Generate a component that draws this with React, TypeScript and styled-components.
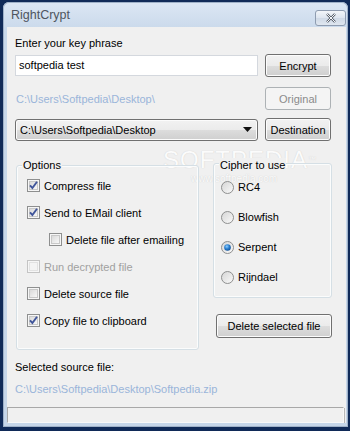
import React from 'react';
import styled, { createGlobalStyle } from 'styled-components';

const GlobalStyle = createGlobalStyle`
	html, body {
		margin: 0;
		padding: 0;
		background: #102a58;
	}
	body {
		width: 350px;
		height: 431px;
		overflow: hidden;
		font-family: 'Liberation Sans', Arial, sans-serif;
		font-size: 11px;
		color: #000;
	}
`;

type CheckProps = { checked?: boolean; disabled?: boolean };

const CheckBox = ({ checked, disabled }: CheckProps) => (
	<svg width="13" height="13" viewBox="0 0 13 13">
		<defs>
			<linearGradient id="cbfill" x1="0" y1="0" x2="1" y2="1">
				<stop offset="0" stopColor="#d8d8d8" />
				<stop offset="1" stopColor="#fafafa" />
			</linearGradient>
		</defs>
		<rect x="0.5" y="0.5" width="12" height="12" fill="#f6f6f6" stroke={disabled ? '#c4c4c4' : '#8e8f8f'} />
		<rect x="2.5" y="2.5" width="8" height="8" fill={disabled ? '#f4f4f4' : 'url(#cbfill)'} stroke={disabled ? '#e2e2e2' : '#c8c8c8'} />
		{checked && (
			<path d="M3 6.4 L5.4 9 L10 2.8" fill="none" stroke="#40559a" strokeWidth="1.9" />
		)}
	</svg>
);

const Radio = ({ checked }: { checked?: boolean }) => (
	<svg width="13" height="13" viewBox="0 0 13 13">
		<defs>
			<linearGradient id="rfill" x1="0" y1="0" x2="1" y2="1">
				<stop offset="0" stopColor="#d4d4d4" />
				<stop offset="1" stopColor="#fbfbfb" />
			</linearGradient>
			<radialGradient id="rdot" cx="0.4" cy="0.35" r="0.7">
				<stop offset="0" stopColor="#8fd0ff" />
				<stop offset="0.5" stopColor="#2b7fd0" />
				<stop offset="1" stopColor="#0e4e94" />
			</radialGradient>
		</defs>
		<circle cx="6.5" cy="6.5" r="6" fill="url(#rfill)" stroke="#8e8f8f" />
		{checked && <circle cx="6.5" cy="6.5" r="3.3" fill="url(#rdot)" />}
	</svg>
);

const App = () => (
	<>
		<GlobalStyle />
		<Window>
			<TitleBar>
				<Title>RightCrypt</Title>
				<CloseButton>
					<svg width="12" height="10" viewBox="0 0 12 10">
						<path d="M2 1 L10 9 M10 1 L2 9" stroke="#555d68" strokeWidth="2.4" fill="none" />
						<path d="M2 1 L10 9 M10 1 L2 9" stroke="#f4f6f9" strokeWidth="1" fill="none" />
					</svg>
				</CloseButton>
			</TitleBar>
			<Client>
				<Watermark>
					SOFTPEDIA<sup>™</sup>
					<small>www.softpedia.com</small>
				</Watermark>
				<Label>Enter your key phrase</Label>
				<Row $top={4}>
					<TextInput>softpedia test</TextInput>
					<Button>Encrypt</Button>
				</Row>
				<Row $top={10}>
					<PathText>C:\Users\Softpedia\Desktop\</PathText>
					<Button disabled>Original</Button>
				</Row>
				<Row $top={8}>
					<Combo>
						<span>C:\Users\Softpedia\Desktop</span>
						<svg width="9" height="5" viewBox="0 0 9 5">
							<path d="M0 0 H9 L4.5 5 Z" fill="#111" />
						</svg>
					</Combo>
					<Button>Destination</Button>
				</Row>
				<Columns>
					<OptionsGroup>
						<GroupTitle>Options</GroupTitle>
						<CheckRow>
							<CheckBox checked />
							<span>Compress file</span>
						</CheckRow>
						<CheckRow>
							<CheckBox checked />
							<span>Send to EMail client</span>
						</CheckRow>
						<CheckRow $indent>
							<CheckBox />
							<span>Delete file after emailing</span>
						</CheckRow>
						<CheckRow $disabled>
							<CheckBox disabled />
							<span>Run decrypted file</span>
						</CheckRow>
						<CheckRow>
							<CheckBox />
							<span>Delete source file</span>
						</CheckRow>
						<CheckRow>
							<CheckBox checked />
							<span>Copy file to clipboard</span>
						</CheckRow>
					</OptionsGroup>
					<RightColumn>
						<CipherGroup>
							<GroupTitle>Cipher to use</GroupTitle>
							<RadioRow>
								<Radio />
								<span>RC4</span>
							</RadioRow>
							<RadioRow>
								<Radio />
								<span>Blowfish</span>
							</RadioRow>
							<RadioRow>
								<Radio checked />
								<span>Serpent</span>
							</RadioRow>
							<RadioRow>
								<Radio />
								<span>Rijndael</span>
							</RadioRow>
						</CipherGroup>
						<WideButton>Delete selected file</WideButton>
					</RightColumn>
				</Columns>
				<SourceLabel>Selected source file:</SourceLabel>
				<SourcePath>C:\Users\Softpedia\Desktop\Softpedia.zip</SourcePath>
				<StatusBar />
			</Client>
		</Window>
	</>
);

export default App;

const Window = styled.div`
	position: relative;
	margin: 2px 0 0 3px;
	width: 339px;
	height: 421px;
	padding: 0 2px 4px 4px;
	border-radius: 6px 6px 0 0;
	background: linear-gradient(#dce7f4, #c8d8ea 30px, #c6d6e9);
	box-shadow: inset 0 0 0 1px #9fb1c8;
	display: flex;
	flex-direction: column;
`;

const TitleBar = styled.div`
	height: 25px;
	display: flex;
	align-items: center;
	justify-content: space-between;
	padding-left: 4px;
`;

const Title = styled.span`
	font-size: 12.5px;
	color: #4e5560;
	margin-top: 1px;
`;

const CloseButton = styled.div`
	width: 29px;
	height: 14px;
	margin-top: 7px;
	border: 1px solid #8e9cb0;
	border-radius: 3px;
	background: linear-gradient(#f2f5f9, #dde5ef 50%, #cfd9e6 51%, #e0e7f0);
	display: flex;
	align-items: center;
	justify-content: center;
`;

const Client = styled.div`
	position: relative;
	flex: 1;
	background: #f0f0f0;
	padding: 9px 0 0 8px;
	display: flex;
	flex-direction: column;
	overflow: hidden;
	& > *:not(:first-child) {
		position: relative;
	}
`;

const Label = styled.div`
	line-height: 14px;
	height: 14px;
`;

const Row = styled.div<{ $top: number }>`
	display: flex;
	align-items: center;
	justify-content: space-between;
	width: 316px;
	margin-top: ${(p) => p.$top}px;
	height: 23px;
`;

const TextInput = styled.div`
	box-sizing: border-box;
	width: 243px;
	height: 21px;
	border: 1px solid #abadb3;
	border-top-color: #e3e9ef;
	border-left-color: #e2e3ea;
	border-right-color: #dbdfe6;
	border-bottom-color: #e3e9ef;
	background: #fff;
	padding: 0 3px;
	line-height: 19px;
	outline: 1px solid #d4d8de;
	outline-offset: -1px;
`;

const Button = styled.button`
	box-sizing: border-box;
	width: 66px;
	height: 23px;
	padding: 0;
	font: inherit;
	color: #000;
	border: 1px solid #707070;
	border-radius: 3px;
	background: linear-gradient(#f2f2f2, #ebebeb 50%, #dddddd 51%, #cfcfcf);
	box-shadow: inset 0 0 0 1px #fcfcfc;
	&:disabled {
		color: #8b8b8b;
		border-color: #adb2b5;
		background: #f4f4f4;
		box-shadow: none;
	}
`;

const PathText = styled.span`
	color: #9ab5da;
	padding-left: 1px;
`;

const Combo = styled.div`
	box-sizing: border-box;
	width: 243px;
	height: 22px;
	border: 1px solid #707070;
	border-radius: 3px;
	background: linear-gradient(#f2f2f2, #ebebeb 50%, #dddddd 51%, #cfcfcf);
	box-shadow: inset 0 0 0 1px #fcfcfc;
	display: flex;
	align-items: center;
	justify-content: space-between;
	padding: 0 5px 0 4px;
`;

const Columns = styled.div`
	display: flex;
	align-items: flex-start;
	gap: 14px;
	margin: 15px 0 0 1px;
`;

const Group = styled.div`
	box-sizing: border-box;
	border: 1px solid #d5dfe5;
	border-radius: 3px;
	box-shadow: inset 0 0 0 1px #fbfcfc;
	display: flex;
	flex-direction: column;
	margin-top: 7px;
`;

const GroupTitle = styled.div`
	align-self: flex-start;
	margin: -8px 0 0 5px;
	padding: 0 1px;
	background: #f0f0f0;
	line-height: 14px;
	height: 14px;
`;

const OptionsGroup = styled(Group)`
	width: 183px;
	height: 185px;
	margin-top: 9px;
`;

const CheckRow = styled.div<{ $indent?: boolean; $disabled?: boolean }>`
	display: flex;
	align-items: center;
	gap: 4px;
	height: 27px;
	padding-left: ${(p) => (p.$indent ? 32 : 10)}px;
	color: ${(p) => (p.$disabled ? '#a0a0a0' : '#000')};
	svg {
		flex: none;
	}
`;

const RightColumn = styled.div`
	display: flex;
	flex-direction: column;
	align-items: flex-end;
	width: 119px;
`;

const CipherGroup = styled(Group)`
	width: 119px;
	height: 135px;
	padding-top: 2px;
`;

const RadioRow = styled.div`
	display: flex;
	align-items: center;
	gap: 4px;
	height: 30px;
	padding-left: 7px;
`;

const WideButton = styled(Button)`
	width: 116px;
	height: 24px;
	margin-top: 16px;
`;

const SourceLabel = styled.div`
	margin-top: 10px;
	line-height: 14px;
	height: 14px;
`;

const SourcePath = styled.div`
	margin-top: 8px;
	line-height: 14px;
	height: 14px;
	color: #9ab5da;
`;

const StatusBar = styled.div`
	box-sizing: border-box;
	margin: 11px 0 0 -8px;
	width: 337px;
	height: 17px;
	border: 1px solid #a8a8a8;
	border-right-color: #f8f8f8;
	border-bottom-color: #f8f8f8;
	box-shadow: 1px 1px 0 #b8b8b8;
`;

const Watermark = styled.div`
	position: absolute;
	left: 156px;
	top: 120px;
	font-family: 'Liberation Sans', Arial, sans-serif;
	font-size: 24px;
	letter-spacing: 1px;
	color: #fbfbfb;
	text-shadow: 0 0 1px rgba(110, 110, 110, 0.3);
	pointer-events: none;
	white-space: nowrap;
	line-height: 26px;
	sup {
		font-size: 8px;
		vertical-align: top;
		letter-spacing: 0;
	}
	small {
		display: block;
		font-size: 10px;
		letter-spacing: 0;
		margin-left: 28px;
		line-height: 12px;
	}
`;
